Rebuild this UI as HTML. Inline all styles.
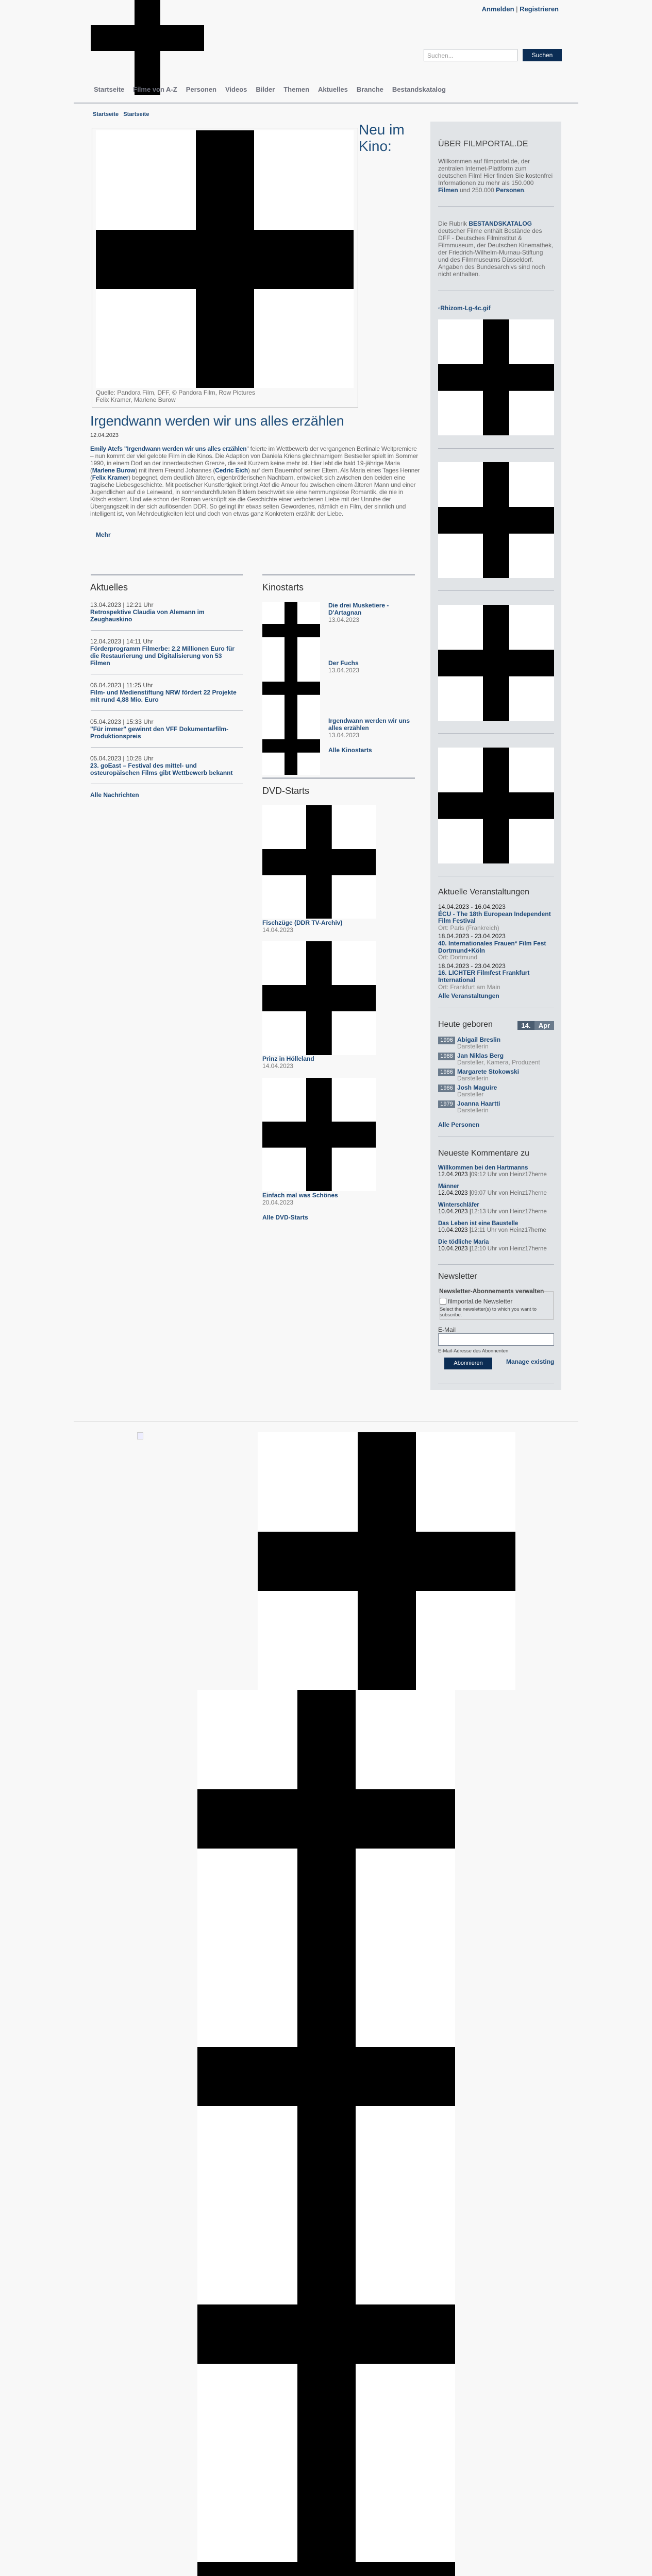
<!DOCTYPE html>
<html><head><meta charset="utf-8"><style>
*{margin:0;padding:0;box-sizing:border-box}
html,body{width:1265px;height:5364px;overflow:hidden}
body{background:#f8f8f8;font-family:"Liberation Sans",Arial,sans-serif;color:#555}
#w{position:relative;width:1265px;height:5364px;overflow:hidden}
.a{position:absolute}
a{color:#1c4877;text-decoration:none;font-weight:bold}
.ph{position:absolute;background:linear-gradient(#000,#000) 50% 0/22.6% 100% no-repeat,linear-gradient(#000,#000) 0 50%/100% 23% no-repeat,#fff}
.nav a{color:#6b6e7a;font-size:13px;margin-right:17px}
.sb{position:absolute;left:850px;width:225px;font-size:12px;line-height:14px;color:#666}
.hr{position:absolute;height:1px;background:#b5bac2}
h3{font-weight:normal;font-size:17px;color:#333}
.it{font-size:12px;line-height:14px;color:#444}
.yr{display:inline-block;background:#6b7b8c;color:#fff;font-size:11px;padding:1px 3px;width:33px;text-align:center;vertical-align:top;margin-right:4px}
</style></head><body><div id="w">

<div class="a" style="left:261px;top:0;width:50px;height:184px;background:#000"></div>
<div class="a" style="left:176px;top:49px;width:220px;height:50px;background:#000"></div>
<div class="a" style="right:181px;top:10px;font-size:13px;color:#555"><a>Anmelden</a> | <a>Registrieren</a></div>
<div class="a" style="left:822px;top:95px;width:182px;height:24px;background:#fff;border:1px solid #b8bcc2;font-size:12px;color:#999;padding:5px 6px">Suchen...</div>
<div class="a" style="left:1014px;top:95px;width:76px;height:24px;background:#0b2d55;color:#fff;font-size:12px;text-align:center;line-height:24px">Suchen</div>
<div class="a nav" style="left:182px;top:165px;white-space:nowrap"><a>Startseite</a><a>Filme von A-Z</a><a>Personen</a><a>Videos</a><a>Bilder</a><a>Themen</a><a>Aktuelles</a><a>Branche</a><a>Bestandskatalog</a></div>
<div class="a" style="left:143px;top:199px;width:979px;height:2px;background:#b8bcc4"></div>
<div class="a" style="left:180px;top:216px;font-size:11px"><a>Startseite</a>&nbsp;&nbsp; <a>Startseite</a></div>

<div class="a" style="left:178px;top:248px;width:517px;height:543px;border:1px solid #bbb"></div>
<div class="ph" style="left:186px;top:253px;width:500px;height:500px"></div>
<div class="a" style="left:186px;top:755px;font-size:12px;line-height:14px;color:#666">Quelle: Pandora Film, DFF, © Pandora Film, Row Pictures<br>Felix Kramer, Marlene Burow</div>
<div class="a" style="left:696px;top:236px;font-size:28px;line-height:32px;color:#1f4e7a">Neu im<br>Kino:</div>
<div class="a" style="left:175px;top:802px;font-size:27px;color:#1f4e7a;white-space:nowrap;letter-spacing:-0.3px">Irgendwann werden wir uns alles erzählen</div>
<div class="a" style="left:175px;top:839px;font-size:11px;color:#444">12.04.2023</div>
<div class="a" style="left:175px;top:864px;width:640px;font-size:12px;line-height:14px;color:#666;letter-spacing:-0.2px"><a>Emily Atefs "Irgendwann werden wir uns alles erzählen</a>" feierte im Wettbewerb der vergangenen Berlinale Weltpremiere – nun kommt der viel gelobte Film in die Kinos. Die Adaption von Daniela Kriens gleichnamigem Bestseller spielt im Sommer 1990, in einem Dorf an der innerdeutschen Grenze, die seit Kurzem keine mehr ist. Hier lebt die bald 19-jährige Maria (<a>Marlene Burow</a>) mit ihrem Freund Johannes (<a>Cedric Eich</a>) auf dem Bauernhof seiner Eltern. Als Maria eines Tages Henner (<a>Felix Kramer</a>) begegnet, dem deutlich älteren, eigenbrötlerischen Nachbarn, entwickelt sich zwischen den beiden eine tragische Liebesgeschichte. Mit poetischer Kunstfertigkeit bringt Atef die Amour fou zwischen einem älteren Mann und einer Jugendlichen auf die Leinwand, in sonnendurchfluteten Bildern beschwört sie eine hemmungslose Romantik, die nie in Kitsch erstarrt. Und wie schon der Roman verknüpft sie die Geschichte einer verbotenen Liebe mit der Unruhe der Übergangszeit in der sich auflösenden DDR. So gelingt ihr etwas selten Gewordenes, nämlich ein Film, der sinnlich und intelligent ist, von Mehrdeutigkeiten lebt und doch von etwas ganz Konkretem erzählt: der Liebe.</div>
<div class="a" style="left:186px;top:1031px;font-size:12px"><a>Mehr</a></div>

<div class="a" style="left:176px;top:1114px;width:295px;height:3px;background:#b8bcc4"></div>
<h3 class="a" style="left:175px;top:1130px;font-size:18px">Aktuelles</h3>
<div class="a it" style="left:175px;top:1167px;width:295px">13.04.2023 | 12:21 Uhr<br><a>Retrospektive Claudia von Alemann im Zeughauskino</a></div>
<div class="hr" style="left:176px;top:1223px;width:295px"></div>
<div class="a it" style="left:175px;top:1238px;width:295px">12.04.2023 | 14:11 Uhr<br><a>Förderprogramm Filmerbe: 2,2 Millionen Euro für die Restaurierung und Digitalisierung von 53 Filmen</a></div>
<div class="hr" style="left:176px;top:1308px;width:295px"></div>
<div class="a it" style="left:175px;top:1323px;width:295px">06.04.2023 | 11:25 Uhr<br><a>Film- und Medienstiftung NRW fördert 22 Projekte mit rund 4,88 Mio. Euro</a></div>
<div class="hr" style="left:176px;top:1379px;width:295px"></div>
<div class="a it" style="left:175px;top:1394px;width:295px">05.04.2023 | 15:33 Uhr<br><a>"Für immer" gewinnt den VFF Dokumentarfilm-Produktionspreis</a></div>
<div class="hr" style="left:176px;top:1450px;width:295px"></div>
<div class="a it" style="left:175px;top:1465px;width:295px">05.04.2023 | 10:28 Uhr<br><a>23. goEast – Festival des mittel- und osteuropäischen Films gibt Wettbewerb bekannt</a></div>
<div class="hr" style="left:176px;top:1521px;width:295px"></div>
<div class="a it" style="left:175px;top:1536px"><a>Alle Nachrichten</a></div>

<div class="a" style="left:509px;top:1114px;width:296px;height:3px;background:#b8bcc4"></div>
<h3 class="a" style="left:509px;top:1130px;font-size:18px">Kinostarts</h3>
<div class="ph" style="left:509px;top:1168px;width:112px;height:112px"></div>
<div class="ph" style="left:509px;top:1280px;width:112px;height:112px"></div>
<div class="ph" style="left:509px;top:1392px;width:112px;height:112px"></div>
<div class="a it" style="left:637px;top:1168px;width:160px"><a>Die drei Musketiere - D'Artagnan</a><br><span style="color:#777">13.04.2023</span></div>
<div class="a it" style="left:637px;top:1280px;width:160px"><a>Der Fuchs</a><br><span style="color:#777">13.04.2023</span></div>
<div class="a it" style="left:637px;top:1392px;width:170px"><a>Irgendwann werden wir uns alles erzählen</a><br><span style="color:#777">13.04.2023</span></div>
<div class="a it" style="left:637px;top:1449px"><a>Alle Kinostarts</a></div>
<div class="a" style="left:509px;top:1509px;width:296px;height:3px;background:#b8bcc4"></div>
<h3 class="a" style="left:509px;top:1525px;font-size:18px">DVD-Starts</h3>
<div class="ph" style="left:509px;top:1563px;width:220px;height:220px"></div>
<div class="a it" style="left:509px;top:1784px"><a>Fischzüge (DDR TV-Archiv)</a><br><span style="color:#777">14.04.2023</span></div>
<div class="ph" style="left:509px;top:1827px;width:220px;height:221px"></div>
<div class="a it" style="left:509px;top:2048px"><a>Prinz in Hölleland</a><br><span style="color:#777">14.04.2023</span></div>
<div class="ph" style="left:509px;top:2092px;width:220px;height:220px"></div>
<div class="a it" style="left:509px;top:2313px"><a>Einfach mal was Schönes</a><br><span style="color:#777">20.04.2023</span></div>
<div class="a it" style="left:509px;top:2356px"><a>Alle DVD-Starts</a></div>

<div class="a" style="left:835px;top:236px;width:254px;height:2462px;background:#e1e4e7"></div>
<div class="sb" style="top:271px;font-size:16px;line-height:18px;color:#444">ÜBER FILMPORTAL.DE</div>
<div class="sb" style="top:306px">Willkommen auf filmportal.de, der zentralen Internet-Plattform zum deutschen Film! Hier finden Sie kostenfrei Informationen zu mehr als 150.000 <a>Filmen</a> und 250.000 <a>Personen</a>.</div>
<div class="hr" style="left:850px;top:400px;width:225px"></div>
<div class="sb" style="top:427px">Die Rubrik <a>BESTANDSKATALOG</a> deutscher Filme enthält Bestände des DFF - Deutsches Filminstitut &amp; Filmmuseum, der Deutschen Kinemathek, der Friedrich-Wilhelm-Murnau-Stiftung und des Filmmuseums Düsseldorf. Angaben des Bundesarchivs sind noch nicht enthalten.</div>
<div class="hr" style="left:850px;top:564px;width:225px"></div>
<div class="sb" style="top:591px"><a>▫Rhizom-Lg-4c.gif</a></div>
<div class="ph" style="left:850px;top:620px;width:225px;height:225px"></div>
<div class="hr" style="left:850px;top:870px;width:225px"></div>
<div class="ph" style="left:850px;top:897px;width:225px;height:225px"></div>
<div class="hr" style="left:850px;top:1146px;width:225px"></div>
<div class="ph" style="left:850px;top:1174px;width:225px;height:225px"></div>
<div class="hr" style="left:850px;top:1423px;width:225px"></div>
<div class="ph" style="left:850px;top:1451px;width:225px;height:225px"></div>
<div class="hr" style="left:850px;top:1700px;width:225px"></div>
<h3 class="a" style="left:850px;top:1723px;font-size:16px">Aktuelle Veranstaltungen</h3>
<div class="sb" style="top:1754px;line-height:13.6px"><span style="color:#222">14.04.2023 - 16.04.2023</span><br><a>ÉCU - The 18th European Independent Film Festival</a><br><span style="color:#888">Ort: Paris (Frankreich)</span><div style="height:3px"></div><span style="color:#222">18.04.2023 - 23.04.2023</span><br><a>40. Internationales Frauen* Film Fest Dortmund+Köln</a><br><span style="color:#888">Ort: Dortmund</span><div style="height:3px"></div><span style="color:#222">18.04.2023 - 23.04.2023</span><br><a>16. LICHTER Filmfest Frankfurt International</a><br><span style="color:#888">Ort: Frankfurt am Main</span><div style="height:4px"></div><a>Alle Veranstaltungen</a></div>
<div class="hr" style="left:850px;top:1956px;width:225px"></div>
<h3 class="a" style="left:850px;top:1980px;font-size:16px">Heute geboren</h3>
<div class="a" style="left:1004px;top:1982px;width:33px;height:17px;background:#4b5d70;color:#fff;font-weight:bold;font-size:13px;text-align:center;line-height:17px">14.</div>
<div class="a" style="left:1037px;top:1982px;width:38px;height:17px;background:#6b7b8c;color:#fff;font-weight:bold;font-size:13px;text-align:center;line-height:17px">Apr</div>
<div class="sb" style="top:2012px;line-height:13px">
<div style="height:31px"><span class="yr">1996</span><span style="display:inline-block"><a>Abigail Breslin</a><br><span style="color:#888">Darstellerin</span></span></div>
<div style="height:31px"><span class="yr">1988</span><span style="display:inline-block"><a>Jan Niklas Berg</a><br><span style="color:#888">Darsteller, Kamera, Produzent</span></span></div>
<div style="height:31px"><span class="yr">1986</span><span style="display:inline-block"><a>Margarete Stokowski</a><br><span style="color:#888">Darstellerin</span></span></div>
<div style="height:31px"><span class="yr">1986</span><span style="display:inline-block"><a>Josh Maguire</a><br><span style="color:#888">Darsteller</span></span></div>
<div style="height:31px"><span class="yr">1979</span><span style="display:inline-block"><a>Joanna Haartti</a><br><span style="color:#888">Darstellerin</span></span></div>
<div style="margin-top:10px"><a>Alle Personen</a></div></div>
<div class="hr" style="left:850px;top:2206px;width:225px"></div>
<h3 class="a" style="left:850px;top:2230px;font-size:16px">Neueste Kommentare zu</h3>
<div class="sb" style="top:2261px;line-height:13.4px;font-size:11.5px">
<div style="height:36px"><a>Willkommen bei den Hartmanns</a><br><span style="color:#222">12.04.2023 |</span>09:12 Uhr von Heinz17herne</div>
<div style="height:36px"><a>Männer</a><br><span style="color:#222">12.04.2023 |</span>09:07 Uhr von Heinz17herne</div>
<div style="height:36px"><a>Winterschläfer</a><br><span style="color:#222">10.04.2023 |</span>12:13 Uhr von Heinz17herne</div>
<div style="height:36px"><a>Das Leben ist eine Baustelle</a><br><span style="color:#222">10.04.2023 |</span>12:11 Uhr von Heinz17herne</div>
<div><a>Die tödliche Maria</a><br><span style="color:#222">10.04.2023 |</span>12:10 Uhr von Heinz17herne</div></div>
<div class="hr" style="left:850px;top:2454px;width:225px"></div>
<h3 class="a" style="left:850px;top:2469px;font-size:16px">Newsletter</h3>
<div class="a" style="left:853px;top:2506px;width:221px;height:56px;border:1px solid #bbb"></div>
<div class="a" style="left:852px;top:2499px;font-size:12px;font-weight:bold;color:#444;background:#e1e4e7">Newsletter-Abonnements verwalten</div>
<div class="a" style="left:853px;top:2519px;width:13px;height:13px;border:1px solid #666;border-radius:2px;background:#fff"></div>
<div class="a" style="left:869px;top:2519px;font-size:12px;color:#444">filmportal.de Newsletter</div>
<div class="a" style="left:853px;top:2536px;width:220px;font-size:9.5px;line-height:11px;color:#444">Select the newsletter(s) to which you want to subscribe.</div>
<div class="a" style="left:850px;top:2574px;font-size:12px;color:#444">E-Mail</div>
<div class="a" style="left:850px;top:2588px;width:225px;height:24px;background:#fff;border:1px solid #7a8594"></div>
<div class="a" style="left:850px;top:2617px;font-size:9.5px;color:#444">E-Mail-Adresse des Abonnenten</div>
<div class="a" style="left:862px;top:2635px;width:93px;height:23px;background:#0b2d55;color:#fff;font-size:11px;text-align:center;line-height:23px">Abonnieren</div>
<div class="a" style="left:982px;top:2636px;font-size:12px"><a>Manage existing</a></div>
<div class="hr" style="left:850px;top:2684px;width:225px"></div>

<div class="a" style="left:143px;top:2759px;width:979px;height:1px;background:#ddd"></div>
<div class="a" style="left:266px;top:2780px;width:12px;height:14px;border:1px solid #ccc;background:#eef"></div>
<div class="ph" style="left:500px;top:2780px;width:500px;height:500px"></div>
<div class="ph" style="left:383px;top:3280px;width:500px;height:500px"></div>
<div class="ph" style="left:383px;top:3780px;width:500px;height:500px"></div>
<div class="ph" style="left:383px;top:4280px;width:500px;height:500px"></div>
<div class="ph" style="left:383px;top:4780px;width:500px;height:500px"></div>

<div class="a" style="left:143px;top:5299px;width:979px;height:2px;background:#d6dae0"></div>
<div class="a" style="left:303px;top:5326px;font-size:11px;color:#7a8290;white-space:nowrap;letter-spacing:-0.3px">
<span style="margin-right:22px">Über uns</span><span style="margin-right:22px">Kontakt</span><span style="margin-right:22px">FAQ</span><span style="margin-right:22px">Newsletter</span><span style="margin-right:22px">Presse</span><span style="margin-right:22px">Sitemap</span><span style="margin-right:22px">Datenschutz</span><span style="margin-right:22px">Impressum</span><span style="margin-right:22px">RSS Filme</span><span>RSS Nachrichten</span></div>
</div></body></html>
